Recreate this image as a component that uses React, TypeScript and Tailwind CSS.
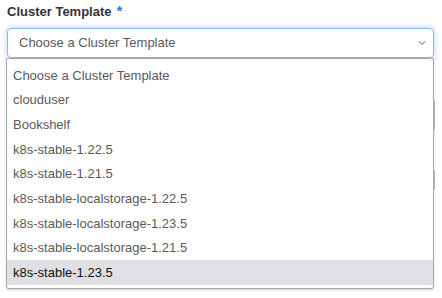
import { ChevronDown } from "lucide-react";

const options = [
  "Choose a Cluster Template",
  "clouduser",
  "Bookshelf",
  "k8s-stable-1.22.5",
  "k8s-stable-1.21.5",
  "k8s-stable-localstorage-1.22.5",
  "k8s-stable-localstorage-1.23.5",
  "k8s-stable-localstorage-1.21.5",
  "k8s-stable-1.23.5",
];

export default function App() {
  const selected = "k8s-stable-1.23.5";

  return (
    <div className="h-[298px] w-[442px] overflow-hidden bg-white font-['Liberation_Sans',Arial,sans-serif]">
      <div className="relative px-[7px] pt-[4px]">
        <label className="flex items-start text-[13px] font-bold leading-[16px] text-[#333]">
          Cluster Template
          <span className="ml-[5px] -mt-[1px] text-[15px] leading-[15px] text-[#2f7fd6]">*</span>
        </label>

        <div className="mt-[8px] flex h-[30px] w-[427px] items-center justify-between rounded-[4px] border border-[#86b7fe] pl-[11px] pr-[5px] text-[13px] text-[#5a5a5a] shadow-[0_0_5px_1px_rgba(80,150,240,0.35)]">
          <span>Choose a Cluster Template</span>
          <ChevronDown size={12} strokeWidth={2} className="text-[#666]" />
        </div>

        {/* fields behind the open list */}
        <div className="mt-[40px] h-[34px] w-[428px] rounded-[4px] border border-[#bbb]" />
        <div className="mt-[36px] h-[24px] w-[428px] rounded-[4px] border border-[#bbb]" />

        <ul className="absolute left-[6px] top-[58px] w-[428px] rounded-b-[3px] border border-[#a8a8a8] bg-white pt-[4px] pb-[3px] text-[13px] shadow-[0_1px_2px_rgba(0,0,0,0.2)]">
          {options.map((opt) => (
            <li
              key={opt}
              className={
                opt === selected
                  ? "flex h-[24.67px] items-center bg-[#dfdfe4] pl-[6px] text-[#111]"
                  : "flex h-[24.67px] items-center pl-[6px] text-[#5a5a5a]"
              }
            >
              {opt}
            </li>
          ))}
        </ul>
      </div>
    </div>
  );
}
